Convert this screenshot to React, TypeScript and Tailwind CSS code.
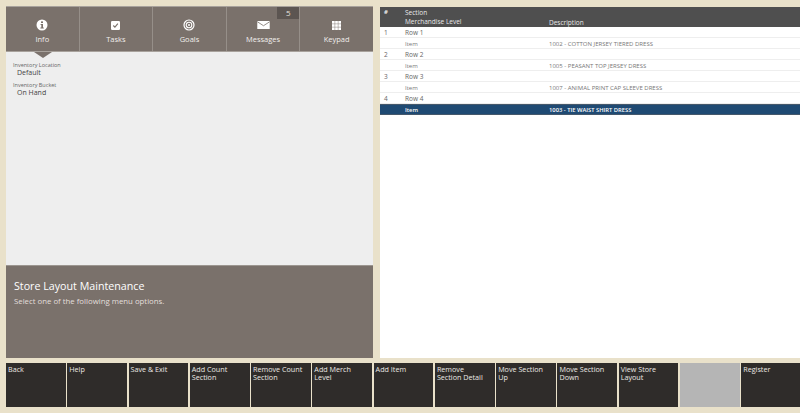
const font = { fontFamily: '"Open Sans", "Noto Sans", sans-serif' }

const tabs = ['Info', 'Tasks', 'Goals', 'Messages', 'Keypad']

const rows = [
  { num: '1', section: 'Row 1' },
  { level: 'Item', desc: '1002 - COTTON JERSEY TIERED DRESS' },
  { num: '2', section: 'Row 2' },
  { level: 'Item', desc: '1005 - PEASANT TOP JERSEY DRESS' },
  { num: '3', section: 'Row 3' },
  { level: 'Item', desc: '1007 - ANIMAL PRINT CAP SLEEVE DRESS' },
  { num: '4', section: 'Row 4' },
]

const buttons = [
  'Back', 'Help', 'Save & Exit', 'Add Count\nSection', 'Remove Count\nSection', 'Add Merch\nLevel', 'Add Item',
  'Remove\nSection Detail', 'Move Section\nUp', 'Move Section\nDown', 'View Store\nLayout', '', 'Register',
]

function TabIcon({ name }: { name: string }) {
  if (name === 'Info') {
    return (
      <svg width="12" height="12" viewBox="0 0 12 12">
        <circle cx="6" cy="6" r="5.5" fill="#fff" />
        <rect x="5" y="2.4" width="2" height="1.6" fill="#7a716b" />
        <path d="M4.6 5h2.4v3.6h.8v.9H4.4v-.9h.9V5.900h-.7z" fill="#7a716b" />
      </svg>
    )
  }
  if (name === 'Tasks') {
    return (
      <svg width="9" height="9" viewBox="0 0 11 11">
        <rect x="0" y="0" width="11" height="11" rx="1.500" fill="#fff" />
        <path d="M2.800 5.500l2 2 3.600-4.200" fill="none" stroke="#7a716b" strokeWidth="1.400" />
      </svg>
    )
  }
  if (name === 'Goals') {
    return (
      <svg width="12" height="12" viewBox="0 0 12 12">
        <circle cx="6" cy="6" r="5" fill="none" stroke="#fff" strokeWidth="1.200" />
        <circle cx="6" cy="6" r="2.800" fill="none" stroke="#fff" strokeWidth="1.100" />
        <circle cx="6" cy="6" r="1" fill="#fff" />
      </svg>
    )
  }
  if (name === 'Messages') {
    return (
      <svg width="13" height="8" viewBox="0 0 14 9">
        <rect width="14" height="9" fill="#fff" />
        <path d="M0 .8l7 4.500L14 .8" fill="none" stroke="#7a716b" strokeWidth="0.900" />
      </svg>
    )
  }
  return (
    <svg width="9" height="9" viewBox="0 0 10 10" fill="#fff">
      {[0, 3.500, 7].map(y =>
        [0, 3.500, 7].map(x => <rect key={`${x}-${y}`} x={x} y={y} width="3" height="3" />)
      )}
    </svg>
  )
}

export default function App() {
  return (
    <div style={font} className="w-[800px] h-[413px] overflow-hidden bg-[#e9e1ca] flex flex-col">
      <div className="flex h-[358px] pt-[6px] pl-[6px] shrink-0">
        {/* Left panel */}
        <div className="w-[367px] flex flex-col shrink-0">
          <div className="h-[46px] flex bg-[#7a716b] border-t border-b border-[#a8a29c] relative">
            {tabs.map((t, i) => (
              <div key={t} className={`flex-1 flex flex-col items-center pt-[12px] text-[7.500px] text-[#f1eeeb] relative ${i > 0 ? 'border-l border-[#968f89]' : ''}`}>
                <div className="h-[12px] flex items-center"><TabIcon name={t} /></div>
                <div className="mt-[3px] leading-[11px]">{t}</div>
                {t === 'Messages' && (
                  <div className="absolute top-0 right-0 w-[22px] h-[12px] bg-[#5c5551] text-[8px] leading-[11px] text-center text-[#e5e1dd]">5</div>
                )}
                {t === 'Info' && (
                  <div className="absolute -bottom-[7px] left-[28px] w-0 h-0 border-l-[9px] border-r-[9px] border-t-[6px] border-l-transparent border-r-transparent border-t-[#7a716b]" />
                )}
              </div>
            ))}
          </div>
          <div className="flex-1 bg-[#eeeeee] pt-[9px] pl-[7px]">
            <div className="text-[5.500px] leading-[8px] text-[#666]">Inventory Location</div>
            <div className="text-[7px] leading-[8px] pl-[4px] text-[#444]">Default</div>
            <div className="text-[5.500px] leading-[8px] text-[#666] mt-[4px]">Inventory Bucket</div>
            <div className="text-[7px] leading-[8px] pl-[4px] text-[#444]">On Hand</div>
          </div>
          <div className="h-[93px] bg-[#7a716b] border-t border-[#9c9690] pt-[12px] pl-[8px]">
            <div className="text-[10.700px] leading-[16px] text-white">Store Layout Maintenance</div>
            <div className="text-[7.800px] leading-[11px] mt-[2px] text-[#e3dfdb]">Select one of the following menu options.</div>
          </div>
        </div>

        {/* Right panel */}
        <div className="flex-1 ml-[7px] mt-[1px] bg-white flex flex-col">
          <div className="h-[20px] bg-[#4f4f4f] flex text-[6.500px] leading-[9px] text-[#e8e8e8] pt-[1px] shrink-0">
            <div className="w-[25px] pl-[4px] font-bold text-[6px]">#</div>
            <div className="w-[144px]">
              <div>Section</div>
              <div>Merchandise Level</div>
            </div>
            <div className="self-end">Description</div>
          </div>
          {rows.map((r, i) => (
            <div key={i} className={`h-[11px] pt-[2px] flex items-center border-b border-[#eeeeee] shrink-0 ${r.num ? 'text-[6.500px] text-[#666]' : 'text-[6px] text-[#777]'}`}>
              <div className="w-[25px] pl-[4px]">{r.num}</div>
              <div className="w-[144px]">{r.section ?? r.level}</div>
              <div>{r.desc}</div>
            </div>
          ))}
          <div className="h-[11px] pt-[1px] flex items-center bg-[#1f4a73] border-t border-b border-[#45586b] text-[5.800px] font-semibold text-white shrink-0">
            <div className="w-[25px]" />
            <div className="w-[144px]">Item</div>
            <div>1003 - TIE WAIST SHIRT DRESS</div>
          </div>
        </div>
      </div>

      {/* Bottom buttons */}
      <div className="mt-[5px] ml-[6px] w-[795px] h-[44px] shrink-0 grid grid-cols-[repeat(13,1fr)] gap-x-[1.500px]">
        {buttons.map((b, i) => (
          <div key={i} className={`h-[44px] px-[2px] pt-[3px] whitespace-pre-line text-[7.200px] leading-[7.500px] text-[#ece9e4] ${b ? 'bg-[#2f2c2a]' : 'bg-[#b5b5b5]'}`}>
            {b}
          </div>
        ))}
      </div>
    </div>
  )
}
